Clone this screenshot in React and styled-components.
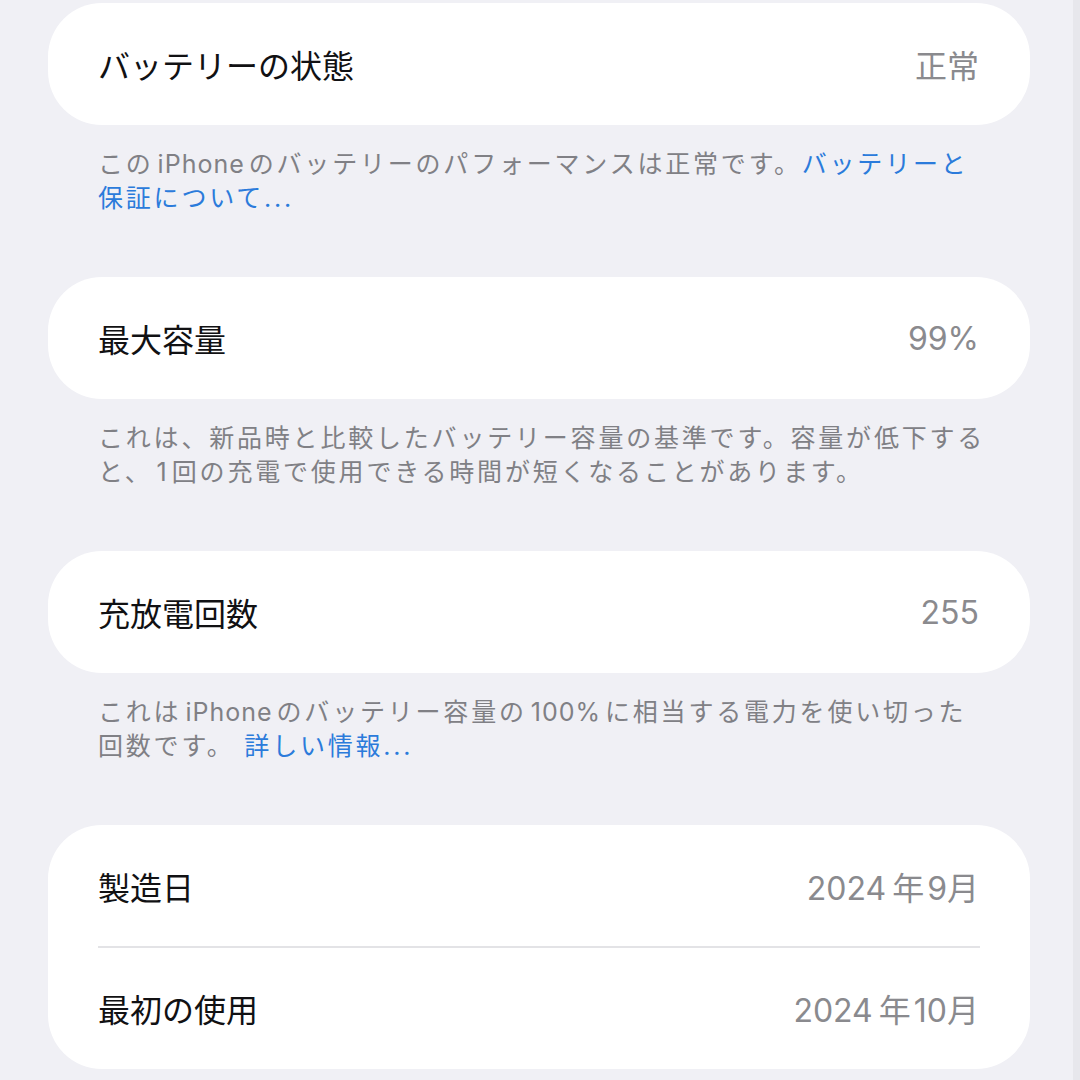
import styled, { createGlobalStyle } from 'styled-components';

const GlobalStyle = createGlobalStyle`
  html, body {
    margin: 0;
    padding: 0;
    background: #f0f0f5;
  }
  body {
    font-family: "Inter", "Noto Sans CJK JP", sans-serif;
    -webkit-font-smoothing: antialiased;
  }
`;

const Page = styled.div`
  box-sizing: border-box;
  width: 1080px;
  min-height: 100vh;
  padding: 3px 43px 0 48px;
  border-right: 7px solid #e7e7ec;
  display: flex;
  flex-direction: column;
`;

const Section = styled.section`
  display: flex;
  flex-direction: column;
`;

const Card = styled.div`
  background: #ffffff;
  border-radius: 54px;
  overflow: hidden;
`;

const Row = styled.div`
  height: 122px;
  padding: 0 51px 0 50px;
  display: flex;
  align-items: center;
  justify-content: space-between;
  font-size: 32px;
`;

const Label = styled.span`
  color: #111113;
`;

const Value = styled.span`
  color: #8a8a8e;
`;

const Unit = styled.span`
  margin: 0 3px 0 6px;
`;

const Divider = styled.div`
  height: 2px;
  margin: -1px 50px -1px 50px;
  background: #e3e3e6;
`;

const Footer = styled.p`
  margin: 0;
  padding: 22px 50px 62px;
  font-size: 25px;
  letter-spacing: 2.8px;
  line-height: 34px;
  color: #808085;
  white-space: nowrap;
`;

const Latin = styled.span`
  margin: 0 4px;
  letter-spacing: 1px;
`;

const Link = styled.span`
  color: #2b7bdb;
`;

const sections = [
  {
    rows: [{ label: 'バッテリーの状態', value: '正常' }],
    footer: (
      <>
        この<Latin>iPhone</Latin>のバッテリーのパフォーマンスは正常です。
        <Link>バッテリーと</Link>
        <br />
        <Link>保証について...</Link>
      </>
    ),
  },
  {
    rows: [{ label: '最大容量', value: '99%' }],
    footer: (
      <>
        これは、新品時と比較したバッテリー容量の基準です。容量が低下する
        <br />
        と、<Latin>1</Latin>回の充電で使用できる時間が短くなることがあります。
      </>
    ),
  },
  {
    rows: [{ label: '充放電回数', value: '255' }],
    footer: (
      <>
        これは<Latin>iPhone</Latin>のバッテリー容量の<Latin>100%</Latin>
        に相当する電力を使い切った
        <br />
        回数です。 <Link>詳しい情報...</Link>
      </>
    ),
  },
  {
    rows: [
      { label: '製造日', value: <>2024<Unit>年</Unit>9月</> },
      { label: '最初の使用', value: <>2024<Unit>年</Unit>10月</> },
    ],
  },
];

const App = () => (
  <Page>
    <GlobalStyle />
    {sections.map((section, i) => (
      <Section key={i}>
        <Card>
          {section.rows.map((row, j) => (
            <div key={j}>
              {j > 0 && <Divider />}
              <Row>
                <Label>{row.label}</Label>
                <Value>{row.value}</Value>
              </Row>
            </div>
          ))}
        </Card>
        {section.footer && <Footer>{section.footer}</Footer>}
      </Section>
    ))}
  </Page>
);

export default App;
